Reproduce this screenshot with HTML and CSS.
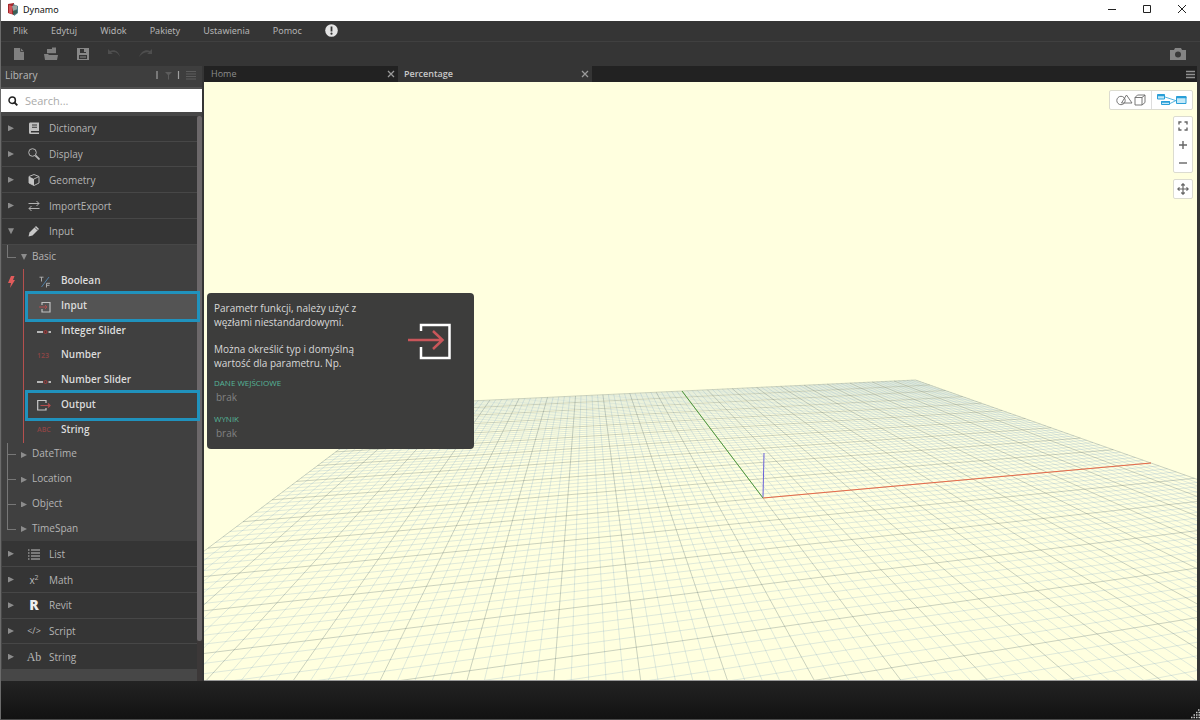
FILE: index.html
```html
<!DOCTYPE html>
<html lang="pl">
<head>
<meta charset="utf-8">
<title>Dynamo</title>
<link rel="stylesheet" href="styles.css">
</head>
<body>
<div class="app">
  <header class="titlebar">
    <svg class="logo" width="12" height="13" viewBox="0 0 12 13"><path d="M1 1l6-1v12l-6-2z" fill="#a3262a"/><path d="M2 2l3 1v8l-3-1z" fill="#d2555a"/><path d="M6 1l5 2v7l-4 3z" fill="#4f7f8c"/><path d="M5 3l5-1v4l-4 2z" fill="#9aa5a0"/><path d="M6 8l4-1v3l-4 2z" fill="#3d5f52"/></svg>
    <span class="title">Dynamo</span>
    <div class="window-buttons">
      <button aria-label="Minimalizuj"><svg width="10" height="10" viewBox="0 0 10 10"><path d="M1 5.500h8" stroke="#222"/></svg></button>
      <button aria-label="Maksymalizuj"><svg width="10" height="10" viewBox="0 0 10 10"><path d="M1.500 1.500h7v7h-7z" stroke="#222" fill="none"/></svg></button>
      <button aria-label="Zamknij"><svg width="10" height="10" viewBox="0 0 10 10"><path d="M1 1l8 8M9 1l-8 8" stroke="#222"/></svg></button>
    </div>
  </header>

  <nav class="menubar">
    <button>Plik</button><button>Edytuj</button><button>Widok</button><button>Pakiety</button><button>Ustawienia</button><button>Pomoc</button>
    <button class="alert" aria-label="Powiadomienia"><svg width="13" height="13" viewBox="0 0 13 13"><circle cx="6.500" cy="6.500" r="6.300" fill="#e4e4e4"/><path d="M6.500 2.500v5" stroke="#333" stroke-width="1.800"/><circle cx="6.500" cy="9.700" r="1.100" fill="#333"/></svg></button>
  </nav>

  <div class="toolbar">
    <button aria-label="Nowy"><svg width="16" height="14" viewBox="0 0 16 14"><path d="M3 1h6.500l3.500 3.500V13H3z" fill="#808080"/><path d="M9.500 1v3.500H13" fill="none" stroke="#444"/></svg></button>
    <button aria-label="Otwórz"><svg width="16" height="14" viewBox="0 0 16 14"><path d="M4 6V2h5V0.500h4V6z" fill="#808080"/><path d="M1 7h4l1 1h9l-1 5H2z" fill="#808080"/><path d="M4 6.500h9" stroke="#444"/></svg></button>
    <button aria-label="Zapisz"><svg width="16" height="14" viewBox="0 0 16 14"><path fill-rule="evenodd" d="M2 1h12v12H2zM5 2v4h6V2zM4 8v4h8V8z" fill="#888"/><path d="M9 2h2v3H9z" fill="#888"/><path d="M5 10h6" stroke="#888"/></svg></button>
    <button aria-label="Cofnij"><svg width="16" height="14" viewBox="0 0 16 14"><path d="M1 2v5h5L4 5.500C8 4 11 6 13 10 12 5 8 2 3 4z" fill="#4e4e4e"/></svg></button>
    <button aria-label="Ponów"><svg width="16" height="14" viewBox="0 0 16 14"><path d="M13 2v5H8l2-1.500C7 4.500 3 6 0 10 2 5 6 2 11 4z" fill="#4e4e4e"/></svg></button>
    <button class="camera" aria-label="Eksportuj obraz"><svg width="16" height="12" viewBox="0 0 16 12"><path d="M0 2h4l1-2h6l1 2h4v10H0z" fill="#858585"/><circle cx="8" cy="6.500" r="3" fill="#3a3a3a"/></svg></button>
  </div>

  <main class="main">
    <aside class="library">
      <div class="library-head">
        <h2>Library</h2>
        <svg width="42" height="12" viewBox="0 0 42 12"><path d="M2 2v8M23.500 2v8" stroke="#a0a0a0" stroke-width="1.200"/><path d="M10 3h7l-3 3v5l-1-1V6z" fill="#5c5c5c"/><path d="M31 2.500h10M31 5h10M31 7.500h10M31 10h10" stroke="#5c5c5c"/></svg>
      </div>
      <label class="search">
        <svg width="10" height="10" viewBox="0 0 10 10"><circle cx="4.200" cy="4.200" r="3.200" fill="none" stroke="#222" stroke-width="1.500"/><path d="M6.500 6.500L9.300 9.300" stroke="#222" stroke-width="1.800"/></svg>
        <input type="search" placeholder="Search..." aria-label="Search">
      </label>
      <div class="library-body">
        <ul class="tree">
          <li class="cat"><i class="arrow"></i><svg class="icon" viewBox="0 0 12 12"><path fill-rule="evenodd" d="M2 0.500h9V9H3v1.500h8V12H2.500Q1 12 1 10.500v-8.500Q1 0.500 2 0.500zM4 2.500v1h5v-1zM4 4.700v1h5v-1z" fill="#c0c0c0"/></svg><button>Dictionary</button></li>
          <li class="cat"><i class="arrow"></i><svg class="icon" viewBox="0 0 12 12"><circle cx="4.500" cy="4.500" r="3.800" fill="none" stroke="#b5b5b5"/><path d="M7.500 7.500L11.500 11.500" stroke="#b5b5b5" stroke-width="1.800"/></svg><button>Display</button></li>
          <li class="cat"><i class="arrow"></i><svg class="icon" viewBox="0 0 12 12"><path d="M6 0.500l5 2v6.500L6 11.500 1 9V2.500z" fill="none" stroke="#b5b5b5"/><path d="M1 2.500l5 2.500v6.500L1 9z" fill="#c4c4c4"/><path d="M6 5l5-2.500" stroke="#b5b5b5"/></svg><button>Geometry</button></li>
          <li class="cat"><i class="arrow"></i><svg class="icon" viewBox="0 0 12 12"><path d="M0.500 3.500h10.500M8.500 1l2.500 2.500L8.500 6M11.500 8.500H1M3.500 6L1 8.500 3.500 11" fill="none" stroke="#b0b0b0"/></svg><button>ImportExport</button></li>
          <li class="cat"><i class="arrow open"></i><svg class="icon" viewBox="0 0 12 12"><path d="M0.500 11.500l1-4L8 1l3 3-6.500 6.500z" fill="#c8c8c8"/><path d="M6.800 2.300l3 3" stroke="#444"/></svg><button>Input</button></li>

          <li class="group last"><span class="branch"></span><i class="arrow open"></i><button>Basic</button></li>

          <li class="leaf"><span class="gutter"><svg width="7" height="12" viewBox="0 0 7 12"><path d="M3 0h3.500L5 4h2L2 12l1-5H0z" fill="#e25b5b"/></svg></span><span class="node"><svg class="icon" viewBox="0 0 12 12"><path d="M0.500 1.200h4M2.500 1v4.500M7.500 11.500v-4.200h3.500M7.500 9.300h3" stroke="#a8a8a8" fill="none"/><path d="M10 1L2.500 11" stroke="#4f7fa8"/></svg><button>Boolean</button></span></li>
          <li class="leaf"><span class="gutter"></span><span class="node marked hover"><svg class="icon" viewBox="0 0 12 12"><path d="M3 4V1.500h8v9.500H3V8" fill="none" stroke="#c0c0c0" stroke-width="1.200"/><path d="M0 6h8M6 4l2 2-2 2" fill="none" stroke="#b14c4c"/></svg><button>Input</button></span></li>
          <li class="leaf"><span class="gutter"></span><span class="node"><svg class="icon wide" viewBox="0 0 14 12"><path d="M0 7h6M11.500 7H14" stroke="#e0e0e0" stroke-width="1.500"/><circle cx="8.500" cy="7" r="1.500" fill="#5a3030" stroke="#a33c3c"/></svg><button>Integer Slider</button></span></li>
          <li class="leaf"><span class="gutter"></span><span class="node"><b class="glyph">123</b><button>Number</button></span></li>
          <li class="leaf"><span class="gutter"></span><span class="node"><svg class="icon wide" viewBox="0 0 14 12"><path d="M0 7h6M11.500 7H14" stroke="#e0e0e0" stroke-width="1.500"/><circle cx="8.500" cy="7" r="1.500" fill="none" stroke="#a33c3c"/></svg><button>Number Slider</button></span></li>
          <li class="leaf"><span class="gutter"></span><span class="node marked"><svg class="icon wide" viewBox="0 0 14 12"><path d="M9 4V1.500H0.700v9.500H9V9" fill="none" stroke="#c8c8c8" stroke-width="1.200"/><path d="M3.500 6.500h9.500M11 4.500l2 2-2 2" fill="none" stroke="#b14c4c" stroke-width="1.200"/></svg><button>Output</button></span></li>
          <li class="leaf"><span class="gutter"></span><span class="node"><b class="glyph">ABC</b><button>String</button></span></li>

          <li class="group"><span class="branch"></span><i class="arrow"></i><button>DateTime</button></li>
          <li class="group"><span class="branch"></span><i class="arrow"></i><button>Location</button></li>
          <li class="group"><span class="branch"></span><i class="arrow"></i><button>Object</button></li>
          <li class="group last"><span class="branch"></span><i class="arrow"></i><button>TimeSpan</button></li>

          <li class="cat"><i class="arrow"></i><svg class="icon" viewBox="0 0 12 12"><path d="M0 2h1.500M3 2h9M0 5h1.500M3 5h9M0 8h1.500M3 8h9M0 11h1.500M3 11h9" stroke="#c0c0c0" stroke-width="1.200"/></svg><button>List</button></li>
          <li class="cat"><i class="arrow"></i><span class="icon sign">x<sup>2</sup></span><button>Math</button></li>
          <li class="cat"><i class="arrow"></i><span class="icon sign revit">R</span><button>Revit</button></li>
          <li class="cat"><i class="arrow"></i><span class="icon sign code">&lt;/&gt;</span><button>Script</button></li>
          <li class="cat"><i class="arrow"></i><span class="icon sign serif">Ab</span><button>String</button></li>
        </ul>
        <div class="scrollbar"><div class="thumb"></div></div>
      </div>
    </aside>

    <section class="workspace">
      <div class="tabs">
        <div class="tab"><button>Home</button><button class="close" aria-label="Zamknij Home"><svg width="8" height="8" viewBox="0 0 8 8"><path d="M1 1l6 6M7 1L1 7" stroke="#9a9a9a" stroke-width="1.300"/></svg></button></div>
        <div class="tab active"><button>Percentage</button><button class="close" aria-label="Zamknij Percentage"><svg width="8" height="8" viewBox="0 0 8 8"><path d="M1 1l6 6M7 1L1 7" stroke="#9a9a9a" stroke-width="1.300"/></svg></button></div>
        <button class="tab-menu" aria-label="Lista kart"><svg width="9" height="9" viewBox="0 0 9 9"><path d="M0 1.500h9M0 4.500h9M0 7.500h9" stroke="#909090" stroke-width="1.300"/></svg></button>
      </div>
      <div class="canvas">
        <svg class="grid" viewBox="0 0 993 598" preserveAspectRatio="xMidYMid slice">
          <path id="minor" class="minor"/>
          <path id="major" class="major"/>
          <path class="axis-x" d="M559 416L947 381"/>
          <path class="axis-y" d="M559 416L478 309"/>
          <path class="axis-z" d="M559 415L560 371"/>
        </svg>
        <div class="controls">
          <div class="views">
            <button aria-label="Podgląd 3D"><svg width="30" height="12" viewBox="0 0 30 12"><g fill="none" stroke="#6a6a6a" stroke-width="0.900"><circle cx="5" cy="6.500" r="4.200"/><path d="M5.500 9L10.500 1l5.500 8z"/><path d="M19 3.500h7v7.500h-7zM19 3.500L21.500 1H29l-3 2.500M29 1v7.500L26 11"/></g></svg></button>
            <button aria-label="Podgląd wykresu"><svg width="30" height="12" viewBox="0 0 30 12"><path d="M8 3l12 4M12 10l8-4" stroke="#55b4e0" fill="none"/><g fill="#c4e9f8" stroke="#2a9fd8"><path d="M0.500 0.500h7v4.500h-7zM4.500 7.500h8v3h-8zM19.500 2.500h9.500v7h-9.500z"/></g><path d="M0 1.500h8M19 3.500h10.500M4 8h9" stroke="#2a9fd8" stroke-width="1.500"/></svg></button>
          </div>
          <div class="zoom">
            <button aria-label="Dopasuj"><svg width="10" height="10" viewBox="0 0 10 10"><path d="M1 3.500V1h2.500M6.500 1H9v2.500M9 6.500V9H6.500M3.500 9H1V6.500" fill="none" stroke="#666" stroke-width="1.400"/></svg></button>
            <button aria-label="Powiększ"><svg width="10" height="10" viewBox="0 0 10 10"><path d="M1 5h8M5 1v8" stroke="#666" stroke-width="1.400"/></svg></button>
            <button aria-label="Pomniejsz"><svg width="10" height="10" viewBox="0 0 10 10"><path d="M1 5h8" stroke="#666" stroke-width="1.400"/></svg></button>
          </div>
          <button class="pan" aria-label="Przesuń"><svg width="12" height="12" viewBox="0 0 12 12"><path d="M1 6h10M6 1v10M4.300 2.500L6 0.800l1.700 1.700M4.300 9.500L6 11.200l1.700-1.700M2.500 4.300L0.800 6l1.700 1.700M9.500 4.300L11.200 6 9.500 7.700" fill="none" stroke="#666" stroke-width="1.200"/></svg></button>
        </div>
        <div class="tooltip" role="tooltip">
          <div class="tip-text">
            <p>Parametr funkcji, należy użyć z węzłami niestandardowymi.</p>
            <p>Można określić typ i domyślną wartość dla parametru. Np.</p>
            <h3>DANE WEJŚCIOWE</h3>
            <span>brak</span>
            <h3>WYNIK</h3>
            <span>brak</span>
          </div>
          <svg class="tip-icon" width="44" height="38" viewBox="0 0 44 38"><path d="M13 8V2h28.500v33H13V24" fill="none" stroke="#fff" stroke-width="2.500"/><path d="M0 17h34M25 8l9.500 9-9.500 9" fill="none" stroke="#c9565a" stroke-width="2.500"/></svg>
        </div>
      </div>
    </section>
  </main>
  <footer class="status"><svg width="10" height="10" viewBox="0 0 10 10"><path d="M8 1h2M6 3.500h4M3.500 6h6.500M1 8.500h9" stroke="#ccc" stroke-width="1.500" stroke-dasharray="1.500 1"/></svg></footer>
</div>
<script src="grid.js"></script>
</body>
</html>
```
FILE: styles.css
```css
* { box-sizing: border-box; }
body { margin: 0; font-family: "Open Sans", "Noto Sans", sans-serif; }
button { background: none; border: 0; padding: 0; margin: 0; font: inherit; color: inherit; display: flex; align-items: center; justify-content: center; }
h2, h3, p, ul { margin: 0; padding: 0; font-weight: 400; }
svg { flex: none; display: block; }

.app { height: 100vh; display: flex; flex-direction: column; background: #353535; color: #b4b4b4; border-left: 1px solid #6b6b6b; border-bottom: 1px solid #4a4a4a; }

.titlebar { flex: none; height: 21px; display: flex; align-items: center; gap: 4px; padding: 0 13px 3px 6px; background: #fff; color: #111; font-family: "Noto Sans", sans-serif; font-size: 9px; }
.window-buttons { margin-left: auto; display: flex; gap: 25px; }

.menubar { flex: none; height: 21px; display: flex; align-items: center; gap: 23px; padding: 0 12px 1px; font-family: "Noto Sans", sans-serif; font-size: 9px; border-bottom: 1px solid #404040; }
.toolbar { flex: none; height: 24px; display: flex; align-items: center; gap: 16px; padding: 0 14px 0 10px; }
.camera { margin-left: auto; }

.main { flex: 1; min-height: 0; display: flex; gap: 2px; padding-right: 3px; }
.library { flex: none; width: 201px; display: flex; flex-direction: column; background: #474747; }
.library-head { flex: none; height: 23px; display: flex; align-items: center; justify-content: space-between; padding: 0 5px 4px 4px; background: #3e3e3e; border-bottom: 2px solid #505050; }
.library-head h2 { font-size: 10px; line-height: 14px; color: #b8b8b8; }
.search { flex: none; height: 23px; display: flex; align-items: center; gap: 7px; padding: 0 7px; background: #fff; }
.search input { flex: 1; min-width: 0; height: 16px; border: 0; padding: 0; outline: 0; background: none; font: 11px "Open Sans", sans-serif; }
.search input::placeholder { color: #aaa; }
.library-body { flex: 1; min-height: 0; display: flex; padding: 4px 0 11px 1px; }

.tree { flex: 1; min-height: 0; list-style: none; display: flex; flex-direction: column; font-size: 10px; line-height: 14px; }
.cat, .group, .leaf { min-height: 0; display: flex; align-items: center; }
.cat { flex: 0 1 26px; background: #353535; border-bottom: 1px solid #474747; padding-left: 6px; }
.cat .icon { margin: 0 9px 0 14px; }
.icon { flex: none; width: 12px; height: 12px; }
.icon.wide { width: 14px; }
.sign { display: flex; align-items: center; justify-content: center; color: #b8b8b8; font-size: 10px; }
.sign sup { font-size: 7px; line-height: 7px; padding-bottom: 4px; }
.revit { color: #eee; font-size: 14px; font-weight: 800; }
.code { font-size: 9px; }
.serif { font-family: "Liberation Serif", serif; font-size: 12px; }
.arrow { flex: none; width: 6px; height: 6px; background: #8c8c8c; clip-path: polygon(0 0, 100% 50%, 0 100%); }
.arrow.open { clip-path: polygon(0 0, 100% 0, 50% 100%); }

.group { flex: 0 1 25px; background: #404040; padding-left: 5px; }
.group .arrow { margin: 0 5px 0 5px; }
.group button { padding-bottom: 3px; }
.branch { align-self: stretch; width: 9px; background: linear-gradient(#777, #777) 0 0 / 1px 100% no-repeat, linear-gradient(#777, #777) 0 50% / 9px 1px no-repeat; }
.last .branch { background-size: 1px 50%, 9px 1px; }

.leaf { flex: 0 1 25px; background: #404040; color: #dcdcdc; font-weight: 600; }
.gutter { align-self: stretch; width: 22px; flex: none; display: flex; align-items: center; padding-left: 6px; border-right: 1px solid #b5504e; }
.node { align-self: stretch; flex: 1; display: flex; align-items: center; gap: 10px; margin-left: 4px; padding-left: 9px; }
.node .icon:not(.wide) { margin: 0 0 0 2px; }
.node button { padding-bottom: 3px; }
.glyph { width: 14px; font-size: 7px; font-weight: 600; color: #8f4545; }
.marked { position: relative; z-index: 1; outline: 3px solid #2092bd; }
.hover { background: #545454; }

.scrollbar { flex: none; width: 5px; margin-bottom: -11px; background: #3c3838; }
.thumb { height: 93%; background: #6c686a; border-radius: 2px; }

.workspace { flex: 1; min-width: 0; display: flex; flex-direction: column; }
.tabs { flex: none; height: 16px; display: flex; background: #222; font-size: 9px; line-height: 12px; color: #8c8c8c; }
.tab { width: 194px; display: flex; align-items: center; justify-content: space-between; padding: 0 3px 0 7px; }
.tab.active { background: #353535; color: #c8c8c8; font-weight: 600; padding-left: 6px; }
.tab-menu { margin-left: auto; padding-right: 2px; }
.canvas { flex: 1; min-height: 0; position: relative; background: #ffffdf; border-bottom: 1px solid #999; }
.grid { position: absolute; inset: 0; width: 100%; height: 100%; fill: none; }
.minor { stroke: #6f9cc4; stroke-opacity: 0.28; stroke-width: 0.800; }
.major { stroke: #5a7076; stroke-opacity: 0.4; stroke-width: 0.800; }
.axis-x { stroke: #e86a4a; }
.axis-y { stroke: #4f9a3a; }
.axis-z { stroke: #6a62d8; }

.controls { position: absolute; top: 8px; right: 4px; display: flex; flex-direction: column; align-items: flex-end; gap: 6px; }
.views, .zoom, .pan { background: #fff; border: 1px solid #dcdcd0; border-radius: 2px; }
.views { display: flex; }
.views button { width: 41px; height: 18px; }
.views button + button { border-left: 1px solid #ddd; }
.zoom { width: 20px; height: 57px; display: flex; flex-direction: column; align-items: center; justify-content: space-between; padding: 4px 0; }
.pan { width: 20px; height: 20px; }

.tooltip { position: absolute; left: 3px; top: 211px; width: 267px; display: flex; justify-content: space-between; padding: 8px 22px 8px 7px; background: #3d3d3c; border-radius: 4px; color: #d8d8d8; font-size: 10px; line-height: 14px; }
.tip-text { width: 160px; }
.tip-text p { margin-bottom: 13px; }
.tip-text p + p { margin-bottom: 7px; }
.tip-text h3 { color: #55b598; font-size: 8px; line-height: 12px; }
.tip-text span { display: block; margin-bottom: 8px; padding-left: 2px; line-height: 16px; color: #828282; }
.tip-text span:last-child { margin-bottom: 0; }
.tip-icon { margin-top: 22px; }

.status { flex: none; height: 38px; display: flex; align-items: flex-end; justify-content: flex-end; background: linear-gradient(#232323, #121212); }
```
FILE: grid.js
```js
// Projects the ground plane (10 major cells each side of the origin) to the view.
function project(x, y) {
  const u = x / 10, v = y / 10;
  const w = 1 + 0.1771 * u + 0.84 * v;
  return [
    ((763 + 591.8 * u + 491.9 * v) / w - 204).toFixed(1),
    ((498 + 47 * u + 221.4 * v) / w - 82).toFixed(1)
  ];
}

function segment(x1, y1, x2, y2) {
  return "M" + project(x1, y1) + "L" + project(x2, y2);
}

const near = -8, far = 10, divisions = 5;
let minor = "", major = "";
for (let i = -10 * divisions; i <= 10 * divisions; i++) {
  const t = i / divisions;
  const isMajor = i % divisions === 0;
  let lines = segment(t, near, t, far);
  if (t >= near) lines += segment(-10, t, 10, t);
  if (isMajor) major += lines; else minor += lines;
}
document.getElementById("minor").setAttribute("d", minor);
document.getElementById("major").setAttribute("d", major);
```
